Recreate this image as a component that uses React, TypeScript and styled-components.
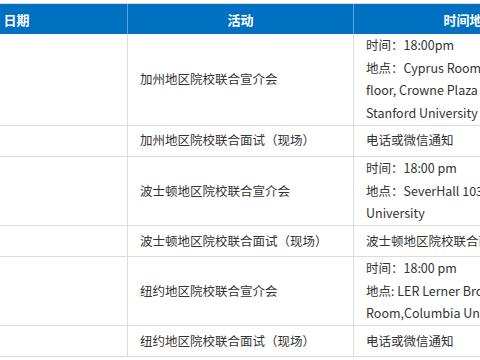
import { Fragment } from "react";
import styled, { createGlobalStyle } from "styled-components";

const Global = createGlobalStyle`
  html, body {
    margin: 0;
    padding: 0;
    background: #fff;
    overflow: hidden;
  }
  body {
    padding-top: 3px;
    font-family: "Noto Sans CJK SC", "Noto Sans", sans-serif;
  }
`;

const Table = styled.div`
  display: grid;
  grid-template-columns: 222px 226px 232px;
  width: 680px;
  margin-left: -94px;
  border-top: 1px solid #dcdcdc;
`;

const Head = styled.div`
  height: 30px;
  box-sizing: border-box;
  background: #0070c0;
  border-right: 1px solid #5ea3da;
  color: #fff;
  font-size: 13px;
  font-weight: bold;
  display: flex;
  align-items: center;
  justify-content: center;
`;

const Cell = styled.div`
  box-sizing: border-box;
  min-height: 31px;
  padding: 0 12px;
  border-right: 1px solid #dcdcdc;
  border-bottom: 1px solid #dcdcdc;
  display: flex;
  flex-direction: column;
  justify-content: center;
  color: #333;
  font-size: 12.5px;
  line-height: 22.7px;
  white-space: nowrap;
`;

type Row = { event: string; place: string[] };

const rows: Row[] = [
  {
    event: "加州地区院校联合宣介会",
    place: [
      "时间：18:00pm",
      "地点：Cyprus Room 1st",
      "floor, Crowne Plaza Palo Alto,",
      "Stanford University",
    ],
  },
  { event: "加州地区院校联合面试（现场）", place: ["电话或微信通知"] },
  {
    event: "波士顿地区院校联合宣介会",
    place: ["时间：18:00 pm", "地点：SeverHall 103, Harvard", "University"],
  },
  { event: "波士顿地区院校联合面试（现场）", place: ["波士顿地区院校联合面试"] },
  {
    event: "纽约地区院校联合宣介会",
    place: ["时间：18:00 pm", "地点: LER Lerner Broadway", "Room,Columbia University"],
  },
  { event: "纽约地区院校联合面试（现场）", place: ["电话或微信通知"] },
];

export default function App() {
  return (
    <>
      <Global />
      <Table>
        <Head>日期</Head>
        <Head>活动</Head>
        <Head>时间地点</Head>
        {rows.map((r, i) => (
          <Fragment key={i}>
            <Cell />
            <Cell>{r.event}</Cell>
            <Cell>
              {r.place.map((l, j) => (
                <span key={j}>{l}</span>
              ))}
            </Cell>
          </Fragment>
        ))}
      </Table>
    </>
  );
}
